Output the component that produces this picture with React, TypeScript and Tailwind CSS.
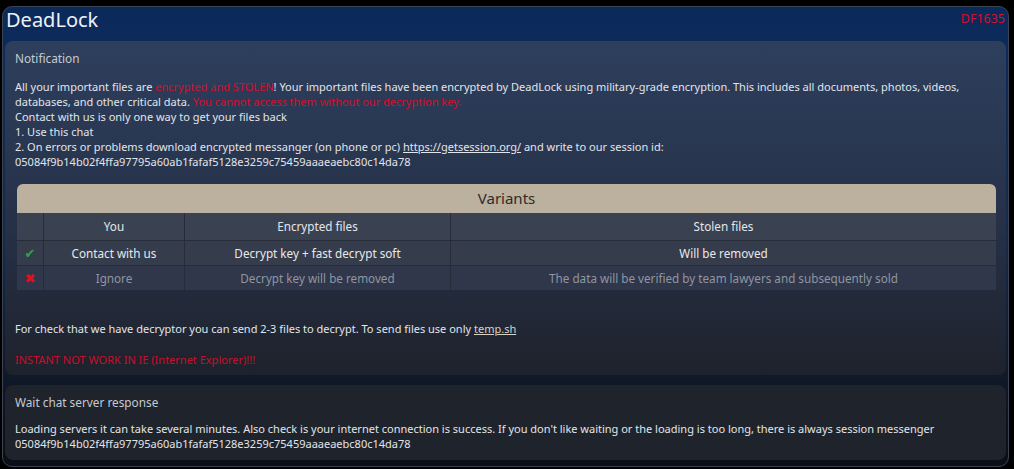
import React from "react";

const SESSION_ID = "05084f9b14b02f4ffa97795a60ab1fafaf5128e3259c75459aaaeaebc80c14da78";

const rows = [
  { ok: true, you: "Contact with us", enc: "Decrypt key + fast decrypt soft", stolen: "Will be removed" },
  { ok: false, you: "Ignore", enc: "Decrypt key will be removed", stolen: "The data will be verified by team lawyers and subsequently sold" },
];

function VariantsTable() {
  return (
    <div className="ml-[2px] mt-[15px] overflow-hidden rounded-t-md">
      <div className="flex h-[29px] items-center justify-center bg-[#bcb09e] text-[15px] text-[#2b2b2b]">Variants</div>
      <div className="grid grid-cols-[26px_140px_265px_1fr] gap-px bg-[#262c38] text-[11.7px]">
        <div className="h-[27px] bg-[#3a4252]" />
        <div className="flex h-[27px] items-center justify-center bg-[#3a4252] text-[#e4e6ea]">You</div>
        <div className="flex h-[27px] items-center justify-center bg-[#3a4252] text-[#e4e6ea]">Encrypted files</div>
        <div className="flex h-[27px] items-center justify-center bg-[#3a4252] text-[#e4e6ea]">Stolen files</div>
        {rows.map((r, i) => (
          <React.Fragment key={i}>
            <div className={`flex h-[24px] items-center justify-center ${r.ok ? "bg-[#353c4b]" : "bg-[#30374a]"}`}>
              {r.ok ? (
                <span className="text-[13px] text-[#2fa34a]" style={{ fontFamily: "'DejaVu Sans'" }}>✔</span>
              ) : (
                <span className="text-[13px] text-[#e0101c]" style={{ fontFamily: "'DejaVu Sans'" }}>✖</span>
              )}
            </div>
            <div className={`flex h-[24px] items-center justify-center ${r.ok ? "bg-[#353c4b] text-[#e8e9ec]" : "bg-[#30374a] text-[#8f96a2]"}`}>{r.you}</div>
            <div className={`flex h-[24px] items-center justify-center ${r.ok ? "bg-[#353c4b] text-[#e8e9ec]" : "bg-[#30374a] text-[#8f96a2]"}`}>{r.enc}</div>
            <div className={`flex h-[24px] items-center justify-center ${r.ok ? "bg-[#353c4b] text-[#e8e9ec]" : "bg-[#30374a] text-[#8f96a2]"}`}>{r.stolen}</div>
          </React.Fragment>
        ))}
      </div>
    </div>
  );
}

export default function App() {
  return (
    <div className="h-[469px] overflow-hidden bg-black pl-[2px] pr-[5px] pt-[6px]" style={{ fontFamily: "'Noto Sans', 'Open Sans', sans-serif" }}>
      <div className="h-[461px] rounded-[10px] border border-[#3b4352] bg-gradient-to-b from-[#0a2a5c] via-[#172b48] to-[#0b0e15] px-[2px]">
        {/* header */}
        <div className="flex h-[34px] items-start justify-between pl-[1px] pr-[1px]">
          <div className="mt-[-1px] text-[20px] leading-[28px] text-[#eef1f6]">DeadLock</div>
          <div className="mt-[3px] text-[12.5px] text-[#d3102c]">DF1635</div>
        </div>

        {/* notification */}
        <div className="rounded-lg bg-gradient-to-b from-[#2d3f5d] via-[#27324a] to-[#1e222c] px-[10px] pb-[8px] pt-[9px] text-[11px] leading-[15px] text-[#e2e5ea]">
          <div className="text-[11.8px] leading-[17px] text-[#c5cad2]">Notification</div>
          <div className="mt-[12px]">
            All your important files are <span className="text-[#d3102c]">encrypted and STOLEN</span>! Your important files have been encrypted by DeadLock using military-grade encryption. This includes all documents, photos, videos, databases, and other critical data. <span className="text-[#d3102c]">You cannot access them without our decryption key.</span>
          </div>
          <div>Contact with us is only one way to get your files back</div>
          <div>1. Use this chat</div>
          <div>
            2. On errors or problems download encrypted messanger (on phone or pc) <span className="underline">https://getsession.org/</span> and write to our session id:
          </div>
          <div>{SESSION_ID}</div>

          <VariantsTable />

          <div className="mt-[31px]">
            For check that we have decryptor you can send 2-3 files to decrypt. To send files use only <span className="text-[#d8d2c4] underline">temp.sh</span>
          </div>
          <div className="mt-[16px] text-[#c8102a]">INSTANT NOT WORK IN IE (Internet Explorer)!!!</div>
        </div>

        {/* wait */}
        <div className="mt-[10px] rounded-lg bg-[#1f232b] px-[10px] pb-[9px] pt-[9px] text-[11px] leading-[15px] text-[#e2e5ea]">
          <div className="text-[11.8px] leading-[17px] text-[#c5cad2]">Wait chat server response</div>
          <div className="mt-[10px]">
            Loading servers it can take several minutes. Also check is your internet connection is success. If you don't like waiting or the loading is too long, there is always session messenger
          </div>
          <div>{SESSION_ID}</div>
        </div>
      </div>
    </div>
  );
}
